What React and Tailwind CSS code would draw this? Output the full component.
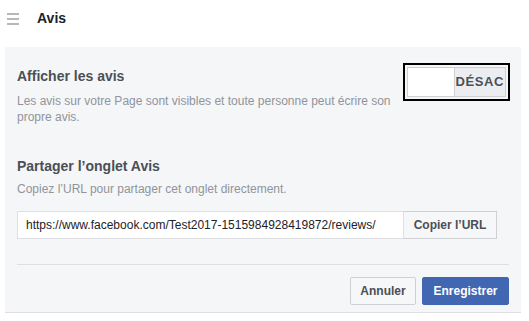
export default function App() {
  return (
    <div className="w-[529px] h-[321px] bg-white font-['Liberation_Sans',Arial,sans-serif] overflow-hidden">
      {/* En-tête */}
      <div className="flex items-center h-[47px] pl-[7px] pb-[10px]">
        <div className="flex flex-col gap-[3px] w-[12px]">
          <span className="h-[2px] bg-[#b5b8bd]" />
          <span className="h-[2px] bg-[#b5b8bd]" />
          <span className="h-[2px] bg-[#b5b8bd]" />
        </div>
        <span className="ml-[18px] text-[14px] font-bold text-[#1d2129]">Avis</span>
      </div>

      {/* Panneau */}
      <div className="ml-[5px] w-[516px] h-[266px] bg-[#f5f6f7] border-b border-[#dddfe2] px-[12px] pt-[16px]">
        <div className="flex justify-between">
          <div className="w-[384px] pt-[4px]">
            <h2 className="text-[14px] font-bold text-[#4b4f56] leading-[18px]">Afficher les avis</h2>
            <p className="mt-[8px] text-[12px] leading-[16px] text-[#90949c]">
              Les avis sur votre Page sont visibles et toute personne peut écrire son propre avis.
            </p>
          </div>
          <div className="mr-[-1px] h-[38px] w-[107px] border-2 border-black p-[2px] flex">
            <div className="w-[48px] bg-white border border-r-0 border-[#ced0d4]" />
            <div className="flex-1 bg-[#ebedf0] border border-[#ced0d4] flex items-center justify-end pr-[1px] text-[13px] font-bold text-[#4b4f56] tracking-[0.6px]">
              DÉSAC
            </div>
          </div>
        </div>

        <h2 className="mt-[32px] text-[14px] font-bold text-[#4b4f56] leading-[18px]">Partager l’onglet Avis</h2>
        <p className="mt-[6px] text-[12px] leading-[16px] text-[#90949c]">
          Copiez l’URL pour partager cet onglet directement.
        </p>

        <div className="mt-[14px] flex h-[28px]">
          <div className="w-[387px] bg-white border border-[#dddfe2] flex items-center pl-[8px] text-[12px] text-[#1d2129]">
            https://www.facebook.com/Test2017-1515984928419872/reviews/
          </div>
          <button className="w-[93px] bg-[#f6f7f9] border border-l-0 border-[#ced0d4] text-[12px] font-bold text-[#4b4f56]">
            Copier l’URL
          </button>
        </div>

        <div className="mt-[25px] h-px bg-[#dddfe2] w-[492px]" />

        <div className="mt-[12px] flex justify-end gap-[6px] w-[492px]">
          <button className="h-[28px] w-[66px] bg-[#f6f7f9] border border-[#ced0d4] rounded-[2px] text-[12px] font-bold text-[#4b4f56]">
            Annuler
          </button>
          <button className="h-[28px] w-[87px] bg-[#4267b2] border border-[#4267b2] rounded-[2px] text-[12px] font-bold text-white">
            Enregistrer
          </button>
        </div>
      </div>
    </div>
  );
}
